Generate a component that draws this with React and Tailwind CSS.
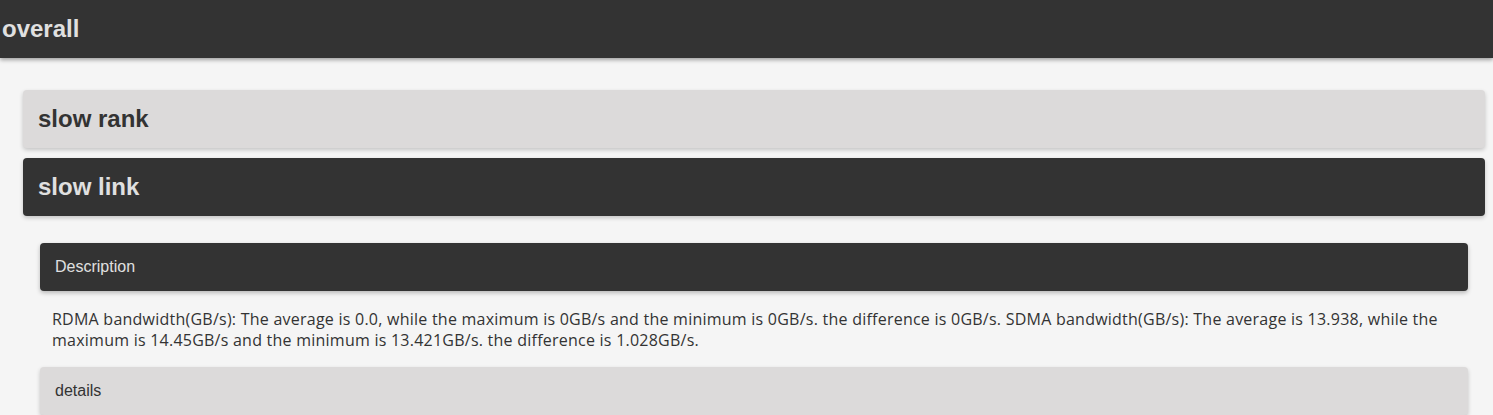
export default function App() {
  const arial = { fontFamily: '"Liberation Sans", Arial, sans-serif' };
  return (
    <div className="min-h-[415px] bg-[#f5f5f5]" style={arial}>
      <div className="h-[58px] bg-[#333333] flex items-center pl-[2px] shadow-[0_2px_4px_rgba(0,0,0,0.35)] relative">
        <h1 className="text-[24px] font-bold text-[#e0e0e0] leading-none">overall</h1>
      </div>
      <div className="pt-[32px] pl-[23px] pr-[8px] flex flex-col">
        <div className="h-[58px] bg-[#dcdada] rounded-[4px] flex items-center px-[15px] shadow-[0_2px_4px_rgba(0,0,0,0.2)]">
          <h2 className="text-[24px] font-bold text-[#333333] leading-none">slow rank</h2>
        </div>
        <div className="mt-[10px] h-[58px] bg-[#333333] rounded-[4px] flex items-center px-[15px] shadow-[0_2px_4px_rgba(0,0,0,0.2)]">
          <h2 className="text-[24px] font-bold text-[#e0e0e0] leading-none">slow link</h2>
        </div>
        <div className="mt-[27px] mx-[17px] flex flex-col">
          <div className="h-[48px] bg-[#333333] rounded-[4px] flex items-center px-[15px] shadow-[0_2px_4px_rgba(0,0,0,0.25)]">
            <span className="text-[16px] text-[#e0e0e0]">Description</span>
          </div>
          <p
            className="mt-[18px] px-[12px] text-[16px] leading-[21px] tracking-[0.24px] text-[#333333]"
            style={{ fontFamily: '"Open Sans", "Noto Sans", sans-serif' }}
          >
            RDMA bandwidth(GB/s): The average is 0.0, while the maximum is 0GB/s and the minimum is 0GB/s. the difference is 0GB/s. SDMA bandwidth(GB/s): The average is 13.938, while the maximum is 14.45GB/s and the minimum is 13.421GB/s. the difference is 1.028GB/s.
          </p>
          <div className="mt-[16px] h-[48px] bg-[#dcdada] rounded-[4px] flex items-center px-[15px] shadow-[0_2px_4px_rgba(0,0,0,0.2)]">
            <span className="text-[16px] text-[#333333]">details</span>
          </div>
        </div>
      </div>
    </div>
  );
}
